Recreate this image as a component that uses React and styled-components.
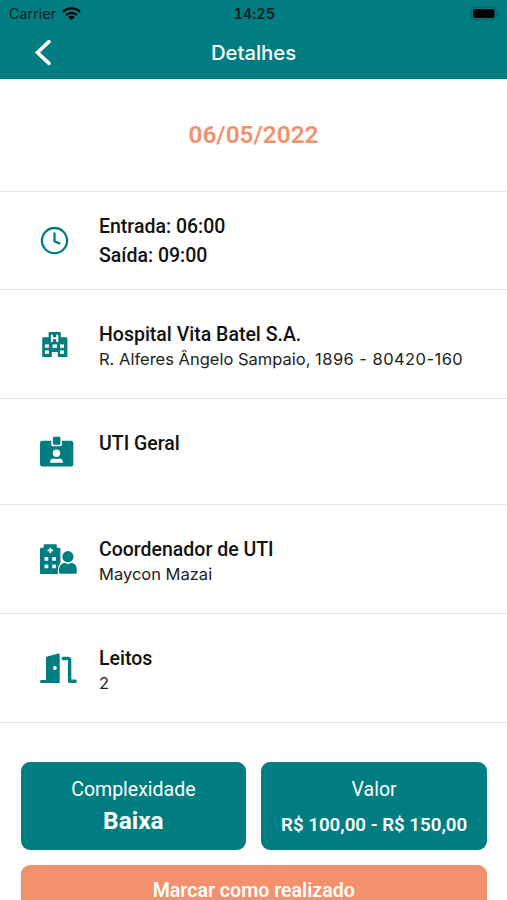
import React from 'react'
import styled, { createGlobalStyle } from 'styled-components'

const teal = '#007d80'
const orange = '#f2916b'

const GlobalStyle = createGlobalStyle`
  body {
    margin: 0;
    background: #fff;
  }
  * {
    box-sizing: border-box;
  }
`

const Screen = styled.div`
  width: 507px;
  height: 900px;
  overflow: hidden;
  background: #fff;
  font-family: Roboto, sans-serif;
`

const Header = styled.header`
  height: 79px;
  background: ${teal};
`

const StatusBar = styled.div`
  display: grid;
  grid-template-columns: 1fr auto 1fr;
  align-items: center;
  height: 27px;
  padding: 0 7px 0 9px;
  font-family: Inter, sans-serif;
  font-size: 14px;
  color: #061b1c;
`

const Carrier = styled.div`
  display: flex;
  align-items: center;
  gap: 6px;
  letter-spacing: 0.2px;
`

const Clock = styled.div`
  font-size: 14px;
  font-weight: 600;
  letter-spacing: 0.3px;
  font-variant-numeric: tabular-nums;
`

const Battery = styled.svg`
  justify-self: end;
`

const NavBar = styled.div`
  display: grid;
  grid-template-columns: 86px 1fr 86px;
  align-items: center;
  height: 50px;
`

const BackButton = styled.button`
  display: flex;
  padding: 0 0 0 34px;
  border: 0;
  background: none;
`

const Title = styled.h1`
  margin: 0;
  text-align: center;
  font-family: Inter, sans-serif;
  font-size: 20.3px;
  font-weight: 500;
  color: #fff;
`

const DateBox = styled.div`
  display: flex;
  align-items: center;
  justify-content: center;
  height: 113px;
  padding-bottom: 1px;
  border-bottom: 1px solid #e6e6e6;
  font-size: 24.4px;
  font-weight: 600;
  color: ${orange};
`

const Row = styled.section`
  display: flex;
  align-items: flex-start;
  height: ${(props) => props.$height}px;
  padding-left: 39px;
  border-bottom: 1px solid #e6e6e6;

  > svg {
    margin-top: ${(props) => props.$iconTop}px;
  }
`

const RowIcon = styled.svg`
  flex: none;
  width: 38px;
  height: 32px;
  fill: ${teal};
`

const RowText = styled.div`
  padding: ${(props) => (props.$times ? 20 : 32)}px 0 0 22px;
`

const Label = styled.div`
  font-size: 19.5px;
  font-weight: 500;
  line-height: ${(props) => props.$line || 25}px;
  color: #111;
`

const Detail = styled.div`
  font-family: Inter, sans-serif;
  font-size: 16.5px;
  line-height: 24px;
  color: #222;
`

const Digits = styled.span`
  letter-spacing: 0.45px;
`

const Footer = styled.footer`
  display: flex;
  flex-direction: column;
  gap: 15px;
  padding: 39px 20px 0 20.5px;
`

const Cards = styled.div`
  display: grid;
  grid-template-columns: 1fr 1fr;
  gap: 15px;
`

const Card = styled.div`
  height: 88px;
  padding-top: 14px;
  border-radius: 9px;
  background: ${teal};
  text-align: center;
  color: #fff;
`

const CardLabel = styled.div`
  font-size: 19.5px;
  line-height: 27px;
`

const CardValue = styled.div`
  font-size: ${(props) => (props.$small ? 18.7 : 24.4)}px;
  font-weight: ${(props) => (props.$small ? 600 : 700)};
  line-height: ${(props) => (props.$small ? 44 : 36)}px;
`

const DoneButton = styled.button`
  height: 51px;
  border: 0;
  border-radius: 9px;
  background: ${orange};
  font-family: inherit;
  font-size: 19.6px;
  font-weight: 600;
  color: #fff;
`

const WifiIcon = () => (
  <svg width="19" height="14" viewBox="0 0 19 14" fill="none" stroke="#000" strokeWidth="2.3">
    <path d="M1 4.9a12.2 12.2 0 0 1 17 0" />
    <path d="M4 8a8 8 0 0 1 11 0" />
    <path d="M9.5 13.3 6.3 10a4.7 4.7 0 0 1 6.4 0z" fill="#000" stroke="none" />
  </svg>
)

const BatteryIcon = () => (
  <Battery width="30" height="15" viewBox="0 0 30 15">
    <rect x="1.2" y="1.2" width="25" height="12.6" rx="3.5" fill="none" stroke="#045b5d" />
    <rect x="3" y="3" width="21.5" height="9" rx="2" fill="#000" />
    <path d="M28 5.5v4q1.4-.7 1.4-2t-1.4-2" fill="#045b5d" />
  </Battery>
)

const ClockIcon = () => (
  <RowIcon viewBox="0 0 38 32">
    <g fill="none" stroke={teal} strokeWidth="2.3" strokeLinecap="round" strokeLinejoin="round">
      <circle cx="15.5" cy="15.6" r="12.6" />
      <path d="M15.5 8.4v7.8l4.8 2.2" />
    </g>
  </RowIcon>
)

const HospitalIcon = () => (
  <RowIcon viewBox="0 0 38 32">
    <path d="M10.6 3h10.2q1 0 1 1v4.3h5.4q1.2 0 1.2 1.2V28h-9.6v-5h-6v5H3.2V9.5q0-1.2 1.2-1.2h5.2V4q0-1 1-1z" />
    <g fill="#fff">
      <path d="M11.9 5.8H14v2.5h3.2V5.8h2.1V13h-2.1v-2.7H14V13h-2.1z" />
      <rect x="5.9" y="15.4" width="4" height="3.4" />
      <rect x="13.6" y="15.4" width="4.3" height="3.4" />
      <rect x="21" y="15.4" width="4" height="3.4" />
      <rect x="5.9" y="21.4" width="4" height="3.4" />
      <rect x="21" y="21.4" width="4" height="3.4" />
    </g>
  </RowIcon>
)

const BadgeIcon = () => (
  <RowIcon viewBox="0 0 38 32">
    <rect x="1" y="4.7" width="33.3" height="25.9" rx="2.5" />
    <path d="M12.3 3h10.6v5.8q0 1.5-1.5 1.5h-7.6q-1.5 0-1.5-1.5z" fill="#fff" />
    <rect x="13.9" y=".7" width="7.5" height="8" rx="1.3" />
    <circle cx="17.5" cy="17.2" r="3.7" fill="#fff" />
    <path d="M11 26.8q0-4.3 4-4.3 2.5 1 5 0 4 0 4 4.3z" fill="#fff" />
  </RowIcon>
)

const CoordinatorIcon = () => (
  <RowIcon viewBox="0 0 38 32">
    <path d="M5.8 1.3h10.8q1.2 0 1.2 1.2v2.3H20q1.4 0 1.4 1.4V31H1V6.2q0-1.4 1.4-1.4h2.2V2.5q0-1.2 1.2-1.2z" />
    <g fill="#fff">
      <path d="M10.5 4.7h1.7v1.9h1.9v1.7h-1.9v1.9h-1.7V8.3H8.6V6.6h1.9z" />
      <rect x="5.6" y="14" width="3.7" height="3.7" rx=".5" />
      <rect x="13.2" y="14" width="3.7" height="3.7" rx=".5" />
      <rect x="5.6" y="21.5" width="3.7" height="3.7" rx=".5" />
      <rect x="13.2" y="21.5" width="3.7" height="3.7" rx=".5" />
    </g>
    <g stroke="#fff" strokeWidth="2.4" paintOrder="stroke">
      <path d="M20 28q0-8 6-8 3.2 1.4 6.5 0 5.3 0 5.3 8v1.3q0 1.500-1.500 1.500H21.500q-1.500 0-1.500-1.500z" />
      <circle cx="28.9" cy="13.7" r="5.6" />
    </g>
  </RowIcon>
)

const DoorIcon = () => (
  <RowIcon viewBox="0 0 38 32">
    <path d="M7 6q0-1.200 1.200-1.500l11-2.900q1.500-.3 1.500 1.200V31H2.300Q1 31 1 29.500T2.300 28H7z" />
    <circle cx="15.9" cy="16" r="1.9" fill="#fff" />
    <path
      d="M24.200 6.500h4.800q1.600 0 1.600 1.600v21.200h5.600"
      fill="none"
      stroke={teal}
      strokeWidth="3.4"
      strokeLinecap="round"
      strokeLinejoin="round"
    />
  </RowIcon>
)

const rows = [
  {
    icon: HospitalIcon,
    label: 'Hospital Vita Batel S.A.',
    detail: 'R. Alferes Ângelo Sampaio, ',
    digits: '1896 - 80420-160',
    height: 109,
    iconTop: 39,
  },
  { icon: BadgeIcon, label: 'UTI Geral', height: 106, iconTop: 37 },
  { icon: CoordinatorIcon, label: 'Coordenador de UTI', detail: 'Maycon Mazai', height: 109, iconTop: 38 },
  { icon: DoorIcon, label: 'Leitos', digits: '2', height: 109, iconTop: 38 },
]

const App = () => {
  return (
    <Screen>
      <GlobalStyle />
      <Header>
        <StatusBar>
          <Carrier>
            Carrier
            <WifiIcon />
          </Carrier>
          <Clock>14:25</Clock>
          <BatteryIcon />
        </StatusBar>
        <NavBar>
          <BackButton aria-label="Voltar">
            <svg width="18" height="27" viewBox="0 0 18 27" fill="none" stroke="#fff" strokeWidth="3.6" strokeLinecap="round">
              <path d="M15 2.6 3.5 13.5 15 24.4" />
            </svg>
          </BackButton>
          <Title>Detalhes</Title>
        </NavBar>
      </Header>
      <DateBox>06/05/2022</DateBox>
      <Row $height={98} $iconTop={33}>
        <ClockIcon />
        <RowText $times>
          <Label $line={29}>Entrada: 06:00</Label>
          <Label $line={29}>Saída: 09:00</Label>
        </RowText>
      </Row>
      {rows.map(({ icon: Icon, label, detail, digits, height, iconTop }) => (
        <Row key={label} $height={height} $iconTop={iconTop}>
          <Icon />
          <RowText>
            <Label>{label}</Label>
            {(detail || digits) && (
              <Detail>
                {detail}
                {digits && <Digits>{digits}</Digits>}
              </Detail>
            )}
          </RowText>
        </Row>
      ))}
      <Footer>
        <Cards>
          <Card>
            <CardLabel>Complexidade</CardLabel>
            <CardValue>Baixa</CardValue>
          </Card>
          <Card>
            <CardLabel>Valor</CardLabel>
            <CardValue $small>R$ 100,00 - R$ 150,00</CardValue>
          </Card>
        </Cards>
        <DoneButton>Marcar como realizado</DoneButton>
      </Footer>
    </Screen>
  )
}

export default App
